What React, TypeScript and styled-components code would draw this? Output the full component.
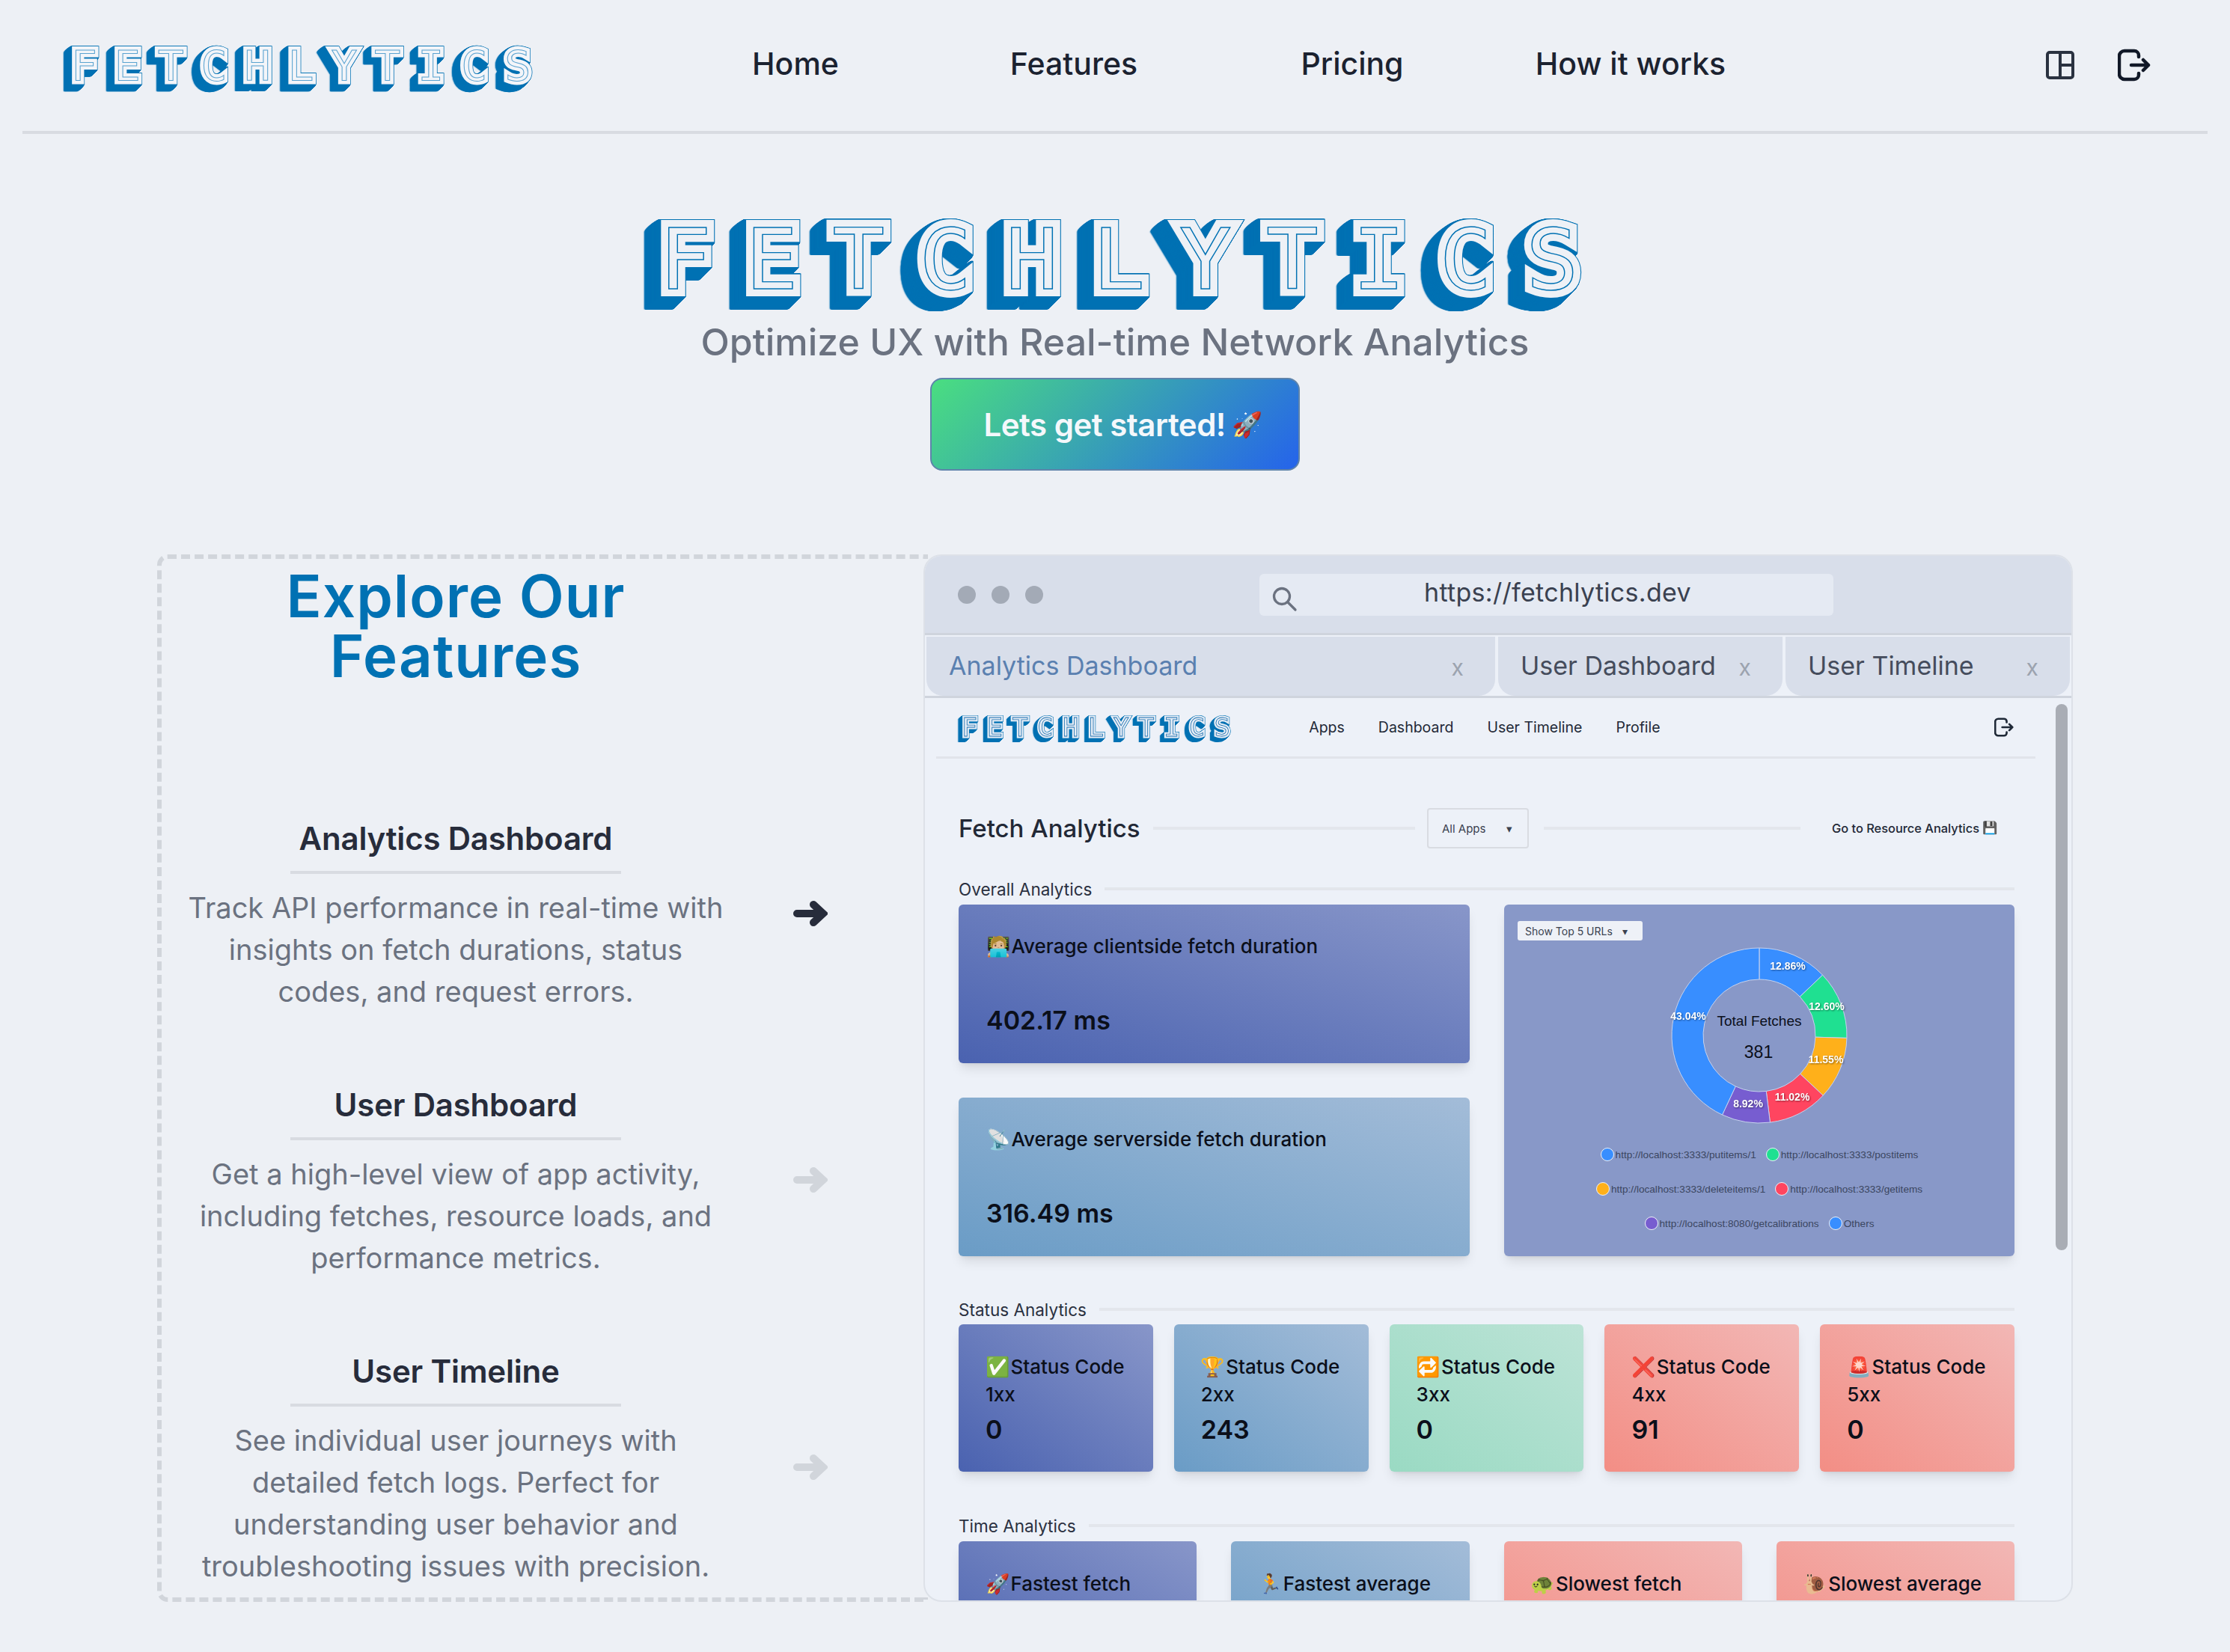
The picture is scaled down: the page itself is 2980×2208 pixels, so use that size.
import React from 'react'
import styled, { createGlobalStyle } from 'styled-components'

const UI = `Inter, "Noto Sans", sans-serif`
const BLUE = '#0071b3'

const GlobalStyle = createGlobalStyle`
  html, body { margin: 0; background: #edf0f5; }
  * { box-sizing: border-box; }
  body { font-family: ${UI}; width: 2980px; height: 2208px; overflow: hidden; }
`

// chained drop-shadows smear the stroked glyphs down-left into a solid block
const extrude = (dx: number, dy: number, color: string) => {
  const steps = Math.max(dx, dy)
  const out: string[] = []
  for (let i = 1; i <= steps; i++) {
    const sx = Math.round((i * dx) / steps) - Math.round(((i - 1) * dx) / steps)
    const sy = Math.round((i * dy) / steps) - Math.round(((i - 1) * dy) / steps)
    out.push(`drop-shadow(${-sx}px ${sy}px 0 ${color})`)
  }
  return out.join(' ')
}

// the three looks of the wordmark: hero, header, small one inside the browser
const Logo = styled.div<{ $size: number; $body: number; $gap: number; $dx: number; $dy: number; $line: number; $ink: string; $fill: string }>`
  position: relative;
  isolation: isolate;
  display: inline-block;
  font-family: "DejaVu Sans Mono", monospace;
  font-weight: 400;
  white-space: nowrap;
  line-height: 1;
  transform: scaleX(1.04);
  font-size: ${(p) => p.$size}px;
  letter-spacing: ${(p) => p.$gap}px;
  margin-right: ${(p) => -p.$gap}px;
  color: ${(p) => p.$fill};
  -webkit-text-stroke: ${(p) => p.$line}px ${(p) => p.$ink};

  &::before,
  &::after {
    content: attr(data-text);
    position: absolute;
    left: 0;
    top: 0;
  }
  &::before {
    z-index: -2;
    color: ${BLUE};
    -webkit-text-stroke: ${(p) => p.$body + p.$line * 1.5}px ${BLUE};
    filter: ${(p) => extrude(p.$dx, p.$dy, BLUE)};
  }
  &::after {
    z-index: -1;
    color: ${(p) => p.$fill};
    -webkit-text-stroke: ${(p) => p.$body}px ${(p) => p.$fill};
  }
`

const Header = styled.header`
  margin: 0 30px;
  height: 179px;
  border-bottom: 4px solid #d8dbe1;
  display: grid;
  grid-template-columns: 847px 1488px 1fr;
  align-items: center;
`

const HeaderLogo = styled.div`
  padding: 0 0 0 77px;
`

const Nav = styled.nav`
  display: grid;
  grid-template-columns: repeat(4, 372px);
  justify-items: center;
  font-size: 41px;
  font-weight: 500;
  color: #1b2230;
  padding-bottom: 6px;
`

const HeaderIcons = styled.div`
  display: flex;
  justify-content: flex-end;
  align-items: center;
  gap: 58px;
  padding-right: 76px;
  padding-bottom: 2px;
`

const Hero = styled.section`
  display: flex;
  flex-direction: column;
  align-items: center;
  padding-top: 112px;
`

const HeroLogo = styled.div`
  padding-left: 12px;
`

const Subtitle = styled.h2`
  margin: 19px 0 0;
  font-size: 50px;
  line-height: 70px;
  font-weight: 500;
  color: #6b7280;
`

const CtaButton = styled.button`
  margin-top: 13px;
  width: 494px;
  height: 124px;
  border: 2px solid #5f84ab;
  border-radius: 16px;
  background: linear-gradient(135deg, #4ade80, #2563eb);
  color: #f4f8fb;
  font-family: ${UI};
  font-size: 42px;
  font-weight: 600;
  letter-spacing: -0.5px;
  display: flex;
  align-items: center;
  justify-content: center;
  gap: 8px;
  padding: 0 0 0 22px;
`

const Showcase = styled.section`
  width: 2560px;
  height: 1400px;
  margin: 112px auto 0;
  display: grid;
  grid-template-columns: 1024px 1536px;
`

const FeaturePanel = styled.div`
  border: 6px dashed #d1d5db;
  border-right: 0;
  border-radius: 14px 0 0 14px;
  padding-top: 10px;
  overflow: hidden;
  margin-right: -6px;
`

const PanelTitle = styled.h2`
  width: 786px;
  margin: 0 0 172px;
  text-align: center;
  font-size: 78px;
  line-height: 80px;
  font-weight: 600;
  letter-spacing: 1px;
  color: ${BLUE};
`

const FeatureRow = styled.article`
  display: grid;
  grid-template-columns: 786px 1fr;
  align-items: center;
  margin-bottom: 92px;
`

const FeatureText = styled.div`
  display: flex;
  flex-direction: column;
  align-items: center;
  text-align: center;
`

const FeatureName = styled.h3`
  width: 442px;
  margin: 0;
  padding-bottom: 11px;
  border-bottom: 4px solid #d8dbe1;
  font-size: 42px;
  line-height: 64px;
  font-weight: 600;
  letter-spacing: -0.2px;
  color: #272c3b;
`

const FeatureDesc = styled.p`
  margin: 17px 0 0;
  font-size: 38px;
  line-height: 56px;
  font-weight: 400;
  color: #6b7280;
`

const ArrowCell = styled.div<{ $active?: boolean }>`
  display: flex;
  justify-content: flex-start;
  padding-left: 58px;
  color: ${(p) => (p.$active ? '#272c3b' : '#d1d5db')};
`

const Browser = styled.div`
  position: relative;
  z-index: 1;
  height: 1400px;
  border: 2px solid #dde1e8;
  border-radius: 24px;
  overflow: hidden;
  background: #edf1f8;
`

const AddressBar = styled.div`
  height: 106px;
  background: #d8deea;
  border-bottom: 3px solid #cfd4dd;
  display: grid;
  grid-template-columns: 447px 767px;
  align-items: center;
`

const Dots = styled.div`
  display: flex;
  gap: 21px;
  padding-left: 44px;
`

const Dot = styled.span`
  width: 24px;
  height: 24px;
  border-radius: 50%;
  background: #a3aab6;
`

const UrlBox = styled.div`
  position: relative;
  height: 56px;
  border-radius: 6px;
  background: #e5eaf3;
  display: flex;
  align-items: center;
  justify-content: center;
  font-size: 34px;
  letter-spacing: 0.3px;
  color: #3a4150;
  padding: 0 0 6px 30px;
`

const SearchGlyph = styled.svg`
  position: absolute;
  left: 15px;
  top: 15px;
`

const TabStrip = styled.div`
  height: 84px;
  padding-top: 2px;
  border-bottom: 3px solid #cfd4dd;
  display: grid;
  grid-template-columns: 760px 380px 380px;
  gap: 4px;
  padding-left: 2px;
  background: #edf1f8;
`

const Tab = styled.div<{ $active?: boolean }>`
  background: #d8deea;
  border-radius: 0 0 22px 22px;
  display: flex;
  align-items: center;
  justify-content: space-between;
  padding: 0 42px 2px 30px;
  font-size: 34px;
  color: ${(p) => (p.$active ? '#5a80b0' : '#454c5c')};
`

const TabClose = styled.span`
  color: #9ca3af;
  font-size: 30px;
  padding-top: 4px;
`

const PageScroll = styled.div`
  position: relative;
  height: 1206px;
  overflow: hidden;
  padding-left: 45px;
  padding-right: 76px;
`

const ScrollThumb = styled.div`
  position: absolute;
  right: 5px;
  top: 8px;
  width: 16px;
  height: 730px;
  border-radius: 8px;
  background: #a9adb5;
`

const InnerNav = styled.div`
  height: 81px;
  margin: 0 -28px 0 -30px;
  padding: 0 29px 0 41px;
  border-bottom: 3px solid #e1e4ea;
  display: flex;
  align-items: center;
`

const InnerLinks = styled.div`
  display: flex;
  gap: 45px;
  margin-left: 112px;
  font-size: 19.5px;
  color: #1f2937;
  flex: 1;
`

const FetchRow = styled.div`
  margin-top: 66px;
  height: 54px;
  display: flex;
  align-items: center;
`

const FetchTitle = styled.h3`
  margin: 0;
  width: 260px;
  font-size: 33px;
  font-weight: 500;
  color: #222836;
`

const Rule = styled.span<{ $width?: number }>`
  height: 4px;
  background: #e3e6ec;
  ${(p) => (p.$width ? `width: ${p.$width}px;` : 'flex: 1;')}
`

const AppSelect = styled.div`
  width: 136px;
  height: 54px;
  margin: 0 20px 0 16px;
  border: 2px solid #d9dce2;
  border-radius: 4px;
  display: flex;
  align-items: center;
  justify-content: space-between;
  padding: 0 20px 0 18px;
  font-size: 15px;
  color: #3b4250;
`

const ResourceLink = styled.div`
  margin-left: 42px;
  width: 222px;
  display: flex;
  align-items: center;
  gap: 4px;
  font-size: 16.4px;
  font-weight: 500;
  color: #222836;
  white-space: nowrap;
`

const SectionLabel = styled.div<{ $top: number }>`
  margin-top: ${(p) => p.$top}px;
  height: 30px;
  display: flex;
  align-items: center;
  gap: 17px;
  font-size: 22.5px;
  color: #2a3040;
`

const OverallGrid = styled.div`
  margin-top: 6px;
  display: grid;
  grid-template-columns: 683px 682px;
  gap: 46px;
`

const DurationStack = styled.div`
  display: flex;
  flex-direction: column;
  gap: 46px;
`

const tones: Record<string, string> = {
  indigo: 'linear-gradient(to top right, #4a62b0, #8896c9)',
  sky: 'linear-gradient(to top right, #6a9cc6, #a3bcd8)',
  mint: 'linear-gradient(to top right, #9adac3, #bce3d6)',
  coral: 'linear-gradient(to top right, #f38e85, #f2b7b5)',
}

const Card = styled.div<{ $tone: string }>`
  border-radius: 6px;
  background: ${(p) => tones[p.$tone]};
  box-shadow: 0 10px 15px -3px rgba(0, 0, 0, 0.1), 0 4px 6px -4px rgba(0, 0, 0, 0.1);
  color: #0b0f1a;
`

const DurationCard = styled(Card)`
  height: 212px;
  padding: 40px 37px 0;
`

const CardTitle = styled.div`
  font-size: 26px;
  line-height: 32px;
  font-weight: 500;
  white-space: nowrap;
`

const CardValue = styled.div`
  margin-top: 61px;
  font-size: 34px;
  line-height: 44px;
  font-weight: 600;
`

const ChartCard = styled.div`
  height: 470px;
  border-radius: 6px;
  background: #8898c8;
  box-shadow: 0 10px 15px -3px rgba(0, 0, 0, 0.1), 0 4px 6px -4px rgba(0, 0, 0, 0.1);
  padding: 22px 18px 0;
`

const TopSelect = styled.div`
  width: 167px;
  height: 26px;
  border-radius: 3px;
  background: #eef1f7;
  display: flex;
  align-items: center;
  justify-content: space-between;
  padding: 0 20px 0 10px;
  font-size: 14px;
  color: #3b4250;
`

const Donut = styled.svg`
  display: block;
  margin: 7px auto 0;
`

const Legend = styled.div`
  margin-top: 16px;
  font-family: "Liberation Sans", Arial, sans-serif;
  font-size: 13.6px;
  color: #3b4660;
`

const LegendRow = styled.div`
  height: 46px;
  display: flex;
  justify-content: center;
  align-items: center;
  gap: 13px;
`

const LegendItem = styled.span`
  display: flex;
  align-items: center;
  gap: 2px;
  white-space: nowrap;
`

const Swatch = styled.i<{ $color: string }>`
  width: 18px;
  height: 18px;
  border-radius: 50%;
  border: 1px solid #eef1f7;
  background: ${(p) => p.$color};
`

const StatusGrid = styled.div`
  margin-top: 5px;
  display: grid;
  grid-template-columns: repeat(5, 1fr);
  gap: 28px;
`

const StatusCard = styled(Card)`
  height: 197px;
  padding: 38px 0 0 36px;
  font-size: 26px;
  line-height: 37px;
  font-weight: 500;
`

const StatusValue = styled.div`
  margin-top: 7px;
  font-size: 34px;
  line-height: 44px;
  font-weight: 600;
`

const TimeGrid = styled.div`
  margin-top: 6px;
  display: grid;
  grid-template-columns: repeat(4, 1fr);
  gap: 46px;
`

const TimeCard = styled(Card)`
  height: 190px;
  padding: 38px 0 0 36px;
  font-size: 26px;
  line-height: 37px;
  font-weight: 500;
  white-space: nowrap;
`

const Emoji = styled.span`
  font-family: "Noto Color Emoji", "Apple Color Emoji", sans-serif;
  line-height: 1;
  margin-right: 1px;
`

const CtaEmoji = styled(Emoji)`
  font-size: 33px;
`

const features = [
  {
    name: 'Analytics Dashboard',
    lines: ['Track API performance in real-time with', 'insights on fetch durations, status', 'codes, and request errors.'],
    active: true,
  },
  {
    name: 'User Dashboard',
    lines: ['Get a high-level view of app activity,', 'including fetches, resource loads, and', 'performance metrics.'],
  },
  {
    name: 'User Timeline',
    lines: [
      'See individual user journeys with',
      'detailed fetch logs. Perfect for',
      'understanding user behavior and',
      'troubleshooting issues with precision.',
    ],
  },
]

const statusCards = [
  { tone: 'indigo', icon: '✅', code: '1xx', value: '0' },
  { tone: 'sky', icon: '🏆', code: '2xx', value: '243' },
  { tone: 'mint', icon: '🔁', code: '3xx', value: '0' },
  { tone: 'coral', icon: '❌', code: '4xx', value: '91' },
  { tone: 'coral', icon: '🚨', code: '5xx', value: '0' },
]

const timeCards = [
  { tone: 'indigo', icon: '🚀', label: 'Fastest fetch' },
  { tone: 'sky', icon: '🏃', label: 'Fastest average' },
  { tone: 'coral', icon: '🐢', label: 'Slowest fetch' },
  { tone: 'coral', icon: '🐌', label: 'Slowest average' },
]

const slices = [
  { pct: 12.86, color: '#388eff', x: 158, y: 32 },
  { pct: 12.6, color: '#1fe091', x: 210, y: 86 },
  { pct: 11.55, color: '#ffb01a', x: 209, y: 157 },
  { pct: 11.02, color: '#ff4560', x: 164, y: 207 },
  { pct: 8.92, color: '#775dd0', x: 105, y: 216 },
  { pct: 43.04, color: '#388eff', x: 25, y: 99 },
]

const legendRows = [
  [
    ['#388eff', 'http://localhost:3333/putitems/1'],
    ['#1fe091', 'http://localhost:3333/postitems'],
  ],
  [
    ['#ffb01a', 'http://localhost:3333/deleteitems/1'],
    ['#ff4560', 'http://localhost:3333/getitems'],
  ],
  [
    ['#775dd0', 'http://localhost:8080/getcalibrations'],
    ['#388eff', 'Others'],
  ],
]

const polar = (r: number, pct: number) => {
  const a = (pct / 100) * Math.PI * 2 - Math.PI / 2
  return `${120 + r * Math.cos(a)} ${120 + r * Math.sin(a)}`
}

const DonutChart = () => {
  let start = 0
  return (
    <Donut width="240" height="240" viewBox="0 0 240 240">
      {slices.map((s) => {
        const end = start + s.pct
        const large = s.pct > 50 ? 1 : 0
        const d = `M${polar(117, start)} A117 117 0 ${large} 1 ${polar(117, end)} L${polar(75, end)} A75 75 0 ${large} 0 ${polar(75, start)} Z`
        start = end
        return <path key={s.pct} d={d} fill={s.color} stroke="#c6d2ee" strokeWidth="1" />
      })}
      {slices.map((s) => (
        <text
          key={s.pct}
          x={s.x}
          y={s.y}
          textAnchor="middle"
          fontFamily="'Liberation Sans', Arial, sans-serif"
          fontSize="14"
          fontWeight="700"
          fill="#fff"
          style={{ filter: 'drop-shadow(1px 1px 1px rgba(0,0,0,.45))' }}
        >
          {s.pct.toFixed(2)}%
        </text>
      ))}
      <text x="120" y="107" textAnchor="middle" fontFamily="'Liberation Sans', Arial, sans-serif" fontSize="19" fill="#0b0f1a">
        Total Fetches
      </text>
      <text x="119" y="150" textAnchor="middle" fontFamily="'Liberation Sans', Arial, sans-serif" fontSize="23" fill="#0b0f1a">
        381
      </text>
    </Donut>
  )
}

const LogoutIcon = ({ size, color }: { size: number; color: string }) => (
  <svg width={size} height={size} viewBox="0 0 44 44" fill="none" stroke={color} strokeWidth="4.5" strokeLinecap="round" strokeLinejoin="round">
    <path d="M28 11V9a6 6 0 0 0-6-6H9a7 7 0 0 0-7 7v24a7 7 0 0 0 7 7h13a6 6 0 0 0 6-6v-2" />
    <path d="M18 22h23M34 15l7 7-7 7" />
  </svg>
)

const LayoutIcon = () => (
  <svg width="38" height="38" viewBox="0 0 38 38" fill="none" stroke="#2a3240" strokeWidth="4" strokeLinejoin="round">
    <rect x="2" y="2" width="34" height="34" rx="3" />
    <path d="M19 2v34M19 19h17" />
  </svg>
)

const HeavyArrow = () => (
  <svg width="46" height="36" viewBox="0 0 46 36" fill="none" stroke="currentColor" strokeWidth="10" strokeLinecap="round" strokeLinejoin="miter">
    <path d="M5 18h32M27 6l13 12-13 12" />
  </svg>
)

const App = () => (
  <>
    <GlobalStyle />
    <Header>
      <HeaderLogo>
        <Logo data-text="FETCHLYTICS" $size={56} $body={10} $gap={22} $dx={10} $dy={9} $line={1} $ink="#5ba3d0" $fill="#f3f5f9">
          FETCHLYTICS
        </Logo>
      </HeaderLogo>
      <Nav>
        <span>Home</span>
        <span>Features</span>
        <span>Pricing</span>
        <span>How it works</span>
      </Nav>
      <HeaderIcons>
        <LayoutIcon />
        <LogoutIcon size={44} color="#111827" />
      </HeaderIcons>
    </Header>

    <Hero>
      <HeroLogo>
        <Logo data-text="FETCHLYTICS" $size={112} $body={20} $gap={44} $dx={20} $dy={17} $line={1.4} $ink={BLUE} $fill="#eef1f6">
          FETCHLYTICS
        </Logo>
      </HeroLogo>
      <Subtitle>Optimize UX with Real-time Network Analytics</Subtitle>
      <CtaButton>
        Lets get started! <CtaEmoji>🚀</CtaEmoji>
      </CtaButton>
    </Hero>

    <Showcase>
      <FeaturePanel>
        <PanelTitle>
          Explore Our
          <br />
          Features
        </PanelTitle>
        {features.map((f) => (
          <FeatureRow key={f.name}>
            <FeatureText>
              <FeatureName>{f.name}</FeatureName>
              <FeatureDesc>
                {f.lines.map((line) => (
                  <React.Fragment key={line}>
                    {line}
                    <br />
                  </React.Fragment>
                ))}
              </FeatureDesc>
            </FeatureText>
            <ArrowCell $active={f.active}>
              <HeavyArrow />
            </ArrowCell>
          </FeatureRow>
        ))}
      </FeaturePanel>

      <Browser>
        <AddressBar>
          <Dots>
            <Dot />
            <Dot />
            <Dot />
          </Dots>
          <UrlBox>
            <SearchGlyph width="36" height="36" viewBox="0 0 24 24" fill="none" stroke="#6b7280" strokeWidth="2.2" strokeLinecap="round">
              <circle cx="10" cy="10" r="7" />
              <path d="M15 15l7 7" />
            </SearchGlyph>
            https://fetchlytics.dev
          </UrlBox>
        </AddressBar>
        <TabStrip>
          <Tab $active>
            Analytics Dashboard <TabClose>x</TabClose>
          </Tab>
          <Tab>
            User Dashboard <TabClose>x</TabClose>
          </Tab>
          <Tab>
            User Timeline <TabClose>x</TabClose>
          </Tab>
        </TabStrip>
        <PageScroll>
          <ScrollThumb />
          <InnerNav>
            <Logo data-text="FETCHLYTICS" $size={34} $body={5} $gap={12} $dx={5} $dy={5} $line={0.8} $ink="#1f72b0" $fill="#e6edf6">
              FETCHLYTICS
            </Logo>
            <InnerLinks>
              <span>Apps</span>
              <span>Dashboard</span>
              <span>User Timeline</span>
              <span>Profile</span>
            </InnerLinks>
            <LogoutIcon size={26} color="#1f2937" />
          </InnerNav>

          <FetchRow>
            <FetchTitle>Fetch Analytics</FetchTitle>
            <Rule $width={350} />
            <AppSelect>
              All Apps <span>▾</span>
            </AppSelect>
            <Rule $width={343} />
            <ResourceLink>
              Go to Resource Analytics <Emoji>💾</Emoji>
            </ResourceLink>
          </FetchRow>

          <SectionLabel $top={39}>
            Overall Analytics
            <Rule />
          </SectionLabel>
          <OverallGrid>
            <DurationStack>
              <DurationCard $tone="indigo">
                <CardTitle>
                  <Emoji>🧑🏼‍💻</Emoji>Average clientside fetch duration
                </CardTitle>
                <CardValue>402.17 ms</CardValue>
              </DurationCard>
              <DurationCard $tone="sky">
                <CardTitle>
                  <Emoji>📡</Emoji>Average serverside fetch duration
                </CardTitle>
                <CardValue>316.49 ms</CardValue>
              </DurationCard>
            </DurationStack>
            <ChartCard>
              <TopSelect>
                Show Top 5 URLs <span>▾</span>
              </TopSelect>
              <DonutChart />
              <Legend>
                {legendRows.map((row) => (
                  <LegendRow key={row[0][1]}>
                    {row.map(([color, url]) => (
                      <LegendItem key={url}>
                        <Swatch $color={color} />
                        {url}
                      </LegendItem>
                    ))}
                  </LegendRow>
                ))}
              </Legend>
            </ChartCard>
          </OverallGrid>

          <SectionLabel $top={56}>
            Status Analytics
            <Rule />
          </SectionLabel>
          <StatusGrid>
            {statusCards.map((c) => (
              <StatusCard key={c.code} $tone={c.tone}>
                <div>
                  <Emoji>{c.icon}</Emoji>Status Code
                </div>
                <div>{c.code}</div>
                <StatusValue>{c.value}</StatusValue>
              </StatusCard>
            ))}
          </StatusGrid>

          <SectionLabel $top={57}>
            Time Analytics
            <Rule />
          </SectionLabel>
          <TimeGrid>
            {timeCards.map((c) => (
              <TimeCard key={c.label} $tone={c.tone}>
                <Emoji>{c.icon}</Emoji>
                {c.label}
              </TimeCard>
            ))}
          </TimeGrid>
        </PageScroll>
      </Browser>
    </Showcase>
  </>
)

export default App
